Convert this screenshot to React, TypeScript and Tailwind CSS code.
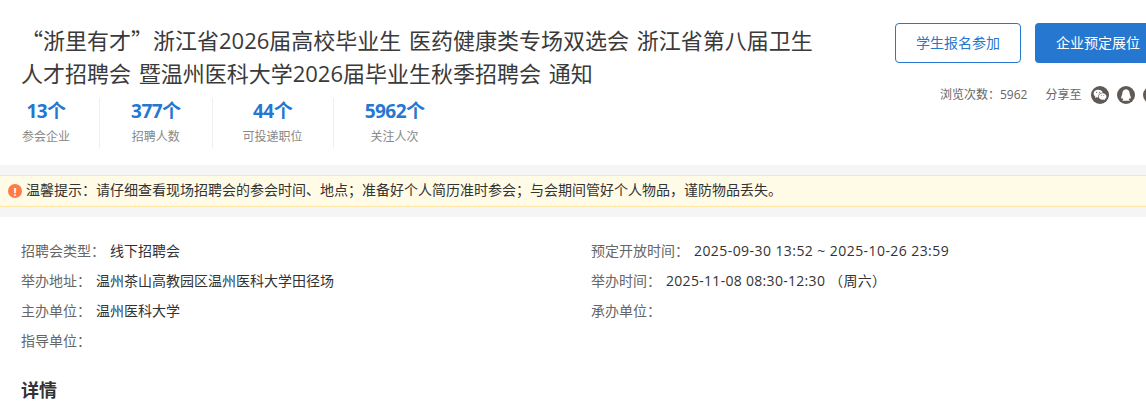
import { RiQqFill, RiWechatFill } from 'react-icons/ri';

const stats = [
  { value: '13个', label: '参会企业', cell: 'pr-[29px]' },
  { value: '377个', label: '招聘人数', cell: 'px-[31px] border-l border-[#efefef]' },
  { value: '44个', label: '可投递职位', cell: 'px-[30px] border-l border-[#efefef]' },
  { value: '5962个', label: '关注人次', cell: 'px-[31px] border-l border-[#efefef]' },
];

function InfoRow({ label, value, valueClass }: { label: string; value?: string; valueClass?: string }) {
  return (
    <div className="flex h-[30px] items-center text-sm">
      <span className="mr-[5px] text-[#666]">{label}：</span>
      {value && <span className={`text-[#333] ${valueClass ?? ''}`}>{value}</span>}
    </div>
  );
}

export default function App() {
  return (
    <div className="h-[401px] w-[1146px] overflow-hidden bg-white font-['Open_Sans','Noto_Sans_CJK_SC',sans-serif]">
      <div className="flex w-[1200px] pl-[21px] pt-[23px]">
        <div className="w-[874px] shrink-0">
          <h1 className="w-[820px] text-[22px] font-normal leading-[33px] text-[#3a3a3a] [word-spacing:2px]">
            <div>
              <span className="font-['Noto_Sans_CJK_SC',sans-serif]">“浙里有才”</span>
              浙江省2026届高校毕业生 医药健康类专场双选会 浙江省第八届卫生
            </div>
            <div>人才招聘会 暨温州医科大学2026届毕业生秋季招聘会 通知</div>
          </h1>
          <div className="mt-2 flex h-[50px] pl-px">
            {stats.map((s) => (
              <div key={s.label} className={`flex flex-col items-center ${s.cell}`}>
                <div className="text-[19px] font-bold leading-[26px] tracking-[-0.5px] text-[#2677d0]">{s.value}</div>
                <div className="mt-[3px] text-xs leading-[20px] text-[#888]">{s.label}</div>
              </div>
            ))}
          </div>
        </div>
        <div className="shrink-0">
          <div className="flex gap-[14px]">
            <button className="h-10 w-[126px] rounded border border-[#2677d0] bg-white text-sm text-[#2677d0]">
              学生报名参加
            </button>
            <button className="h-10 w-[126px] rounded bg-[#2677d0] text-sm text-white">企业预定展位</button>
          </div>
          <div className="mt-[23px] flex items-center pl-[45px] text-xs text-[#666]">
            <span>浏览次数：5962</span>
            <span className="ml-[18px]">分享至</span>
            <span className="ml-[10px] flex gap-2">
              <span className="flex h-[18px] w-[18px] items-center justify-center rounded-full bg-[#5f5a55] text-white">
                <RiWechatFill size={14} />
              </span>
              <span className="flex h-[18px] w-[18px] items-center justify-center rounded-full bg-[#5f5a55] text-white">
                <RiQqFill size={14} />
              </span>
              <span className="h-[18px] w-[18px] rounded-full bg-[#5f5a55]" />
            </span>
          </div>
        </div>
      </div>

      <div className="mt-[17px] bg-[#f5f5f5] py-[10px]">
        <div className="flex h-8 w-[1160px] items-center gap-1 border-y border-[#ffe9a8] bg-[#fffbe6] pl-2 text-sm text-[#333]">
          <span className="flex h-[14px] w-[14px] items-center justify-center rounded-full bg-[#ff7a45] text-[11px] font-bold leading-none text-white">
            !
          </span>
          <span className="mb-[3px]">
            温馨提示：请仔细查看现场招聘会的参会时间、地点；准备好个人简历准时参会；与会期间管好个人物品，谨防物品丢失。
          </span>
        </div>
      </div>

      <div className="grid grid-cols-[570px_1fr] pl-[21px] pt-[19px]">
        <InfoRow label="招聘会类型" value="线下招聘会" />
        <InfoRow label="预定开放时间" value="2025-09-30 13:52 ~ 2025-10-26 23:59" valueClass="tracking-[0.43px]" />
        <InfoRow label="举办地址" value="温州茶山高教园区温州医科大学田径场" />
        <InfoRow label="举办时间" value="2025-11-08 08:30-12:30 （周六）" valueClass="tracking-[0.3px]" />
        <InfoRow label="主办单位" value="温州医科大学" />
        <InfoRow label="承办单位" />
        <InfoRow label="指导单位" />
      </div>

      <h2 className="mt-[21px] pl-[21px] text-lg font-bold leading-[26px] text-[#333]">详情</h2>
    </div>
  );
}
